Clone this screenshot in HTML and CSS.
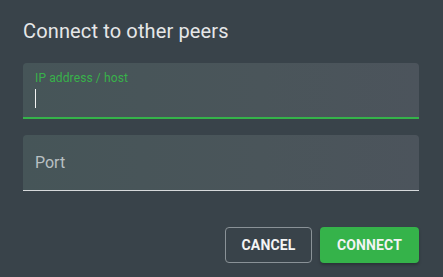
FILE: index.html
```html
<!DOCTYPE html>
<html lang="en">
<head>
<meta charset="utf-8">
<title>Connect to other peers</title>
<link rel="stylesheet" href="styles.css">
</head>
<body>
<div class="dialog">
  <h1 class="title">Connect to other peers</h1>
  <div class="field field-active">
    <label class="field-label">IP address / host</label>
    <span class="caret"></span>
  </div>
  <div class="field field-idle">
    <span class="placeholder">Port</span>
  </div>
  <div class="actions">
    <button class="btn btn-outline">CANCEL</button>
    <button class="btn btn-primary">CONNECT</button>
  </div>
</div>
</body>
</html>
```

FILE: styles.css
```css
html, body {
  margin: 0;
  padding: 0;
}
body {
  width: 443px;
  height: 277px;
  background: #39434a;
  font-family: Roboto, "Liberation Sans", sans-serif;
  overflow: hidden;
}
.dialog {
  padding: 19px 24px 0 23px;
  display: flex;
  flex-direction: column;
}
.title {
  margin: 0 0 20px 0;
  font-size: 20px;
  line-height: 24px;
  font-weight: 400;
  letter-spacing: 0.14px;
  color: #e6e7e8;
}
.field {
  box-sizing: border-box;
  height: 56px;
  border-radius: 4px 4px 0 0;
  background: linear-gradient(90deg, #465558 0%, #4a555a 60%, #4c545c 100%);
  padding: 0 12px;
}
.field-active {
  border-bottom: 2px solid #35b34a;
  display: flex;
  flex-direction: column;
  padding-top: 7px;
}
.field-label {
  font-size: 12px;
  line-height: 16px;
  letter-spacing: 0.12px;
  color: #38b24a;
}
.caret {
  display: block;
  width: 1px;
  height: 19px;
  margin-top: 3px;
  background: #f2f2f2;
}
.field-idle {
  margin-top: 16px;
  border-bottom: 1px solid #d6d9db;
  display: flex;
  align-items: center;
}
.placeholder {
  font-size: 16px;
  line-height: 20px;
  color: #b9c0c3;
}
.actions {
  margin-top: 36px;
  display: flex;
  justify-content: flex-end;
  gap: 8px;
}
.btn {
  box-sizing: border-box;
  height: 36px;
  padding: 0 12px;
  border-radius: 4px;
  font-family: Roboto, "Liberation Sans", sans-serif;
  font-size: 14px;
  font-weight: 700;
  letter-spacing: 0.15px;
  color: #f3f4f4;
  cursor: pointer;
}
.btn-outline {
  background: transparent;
  border: 1px solid #8a9297;
  width: 87px;
}
.btn-primary {
  background: #35b34a;
  border: none;
  width: 99px;
  box-shadow: 0 2px 3px rgba(0, 0, 0, 0.25);
}
```
